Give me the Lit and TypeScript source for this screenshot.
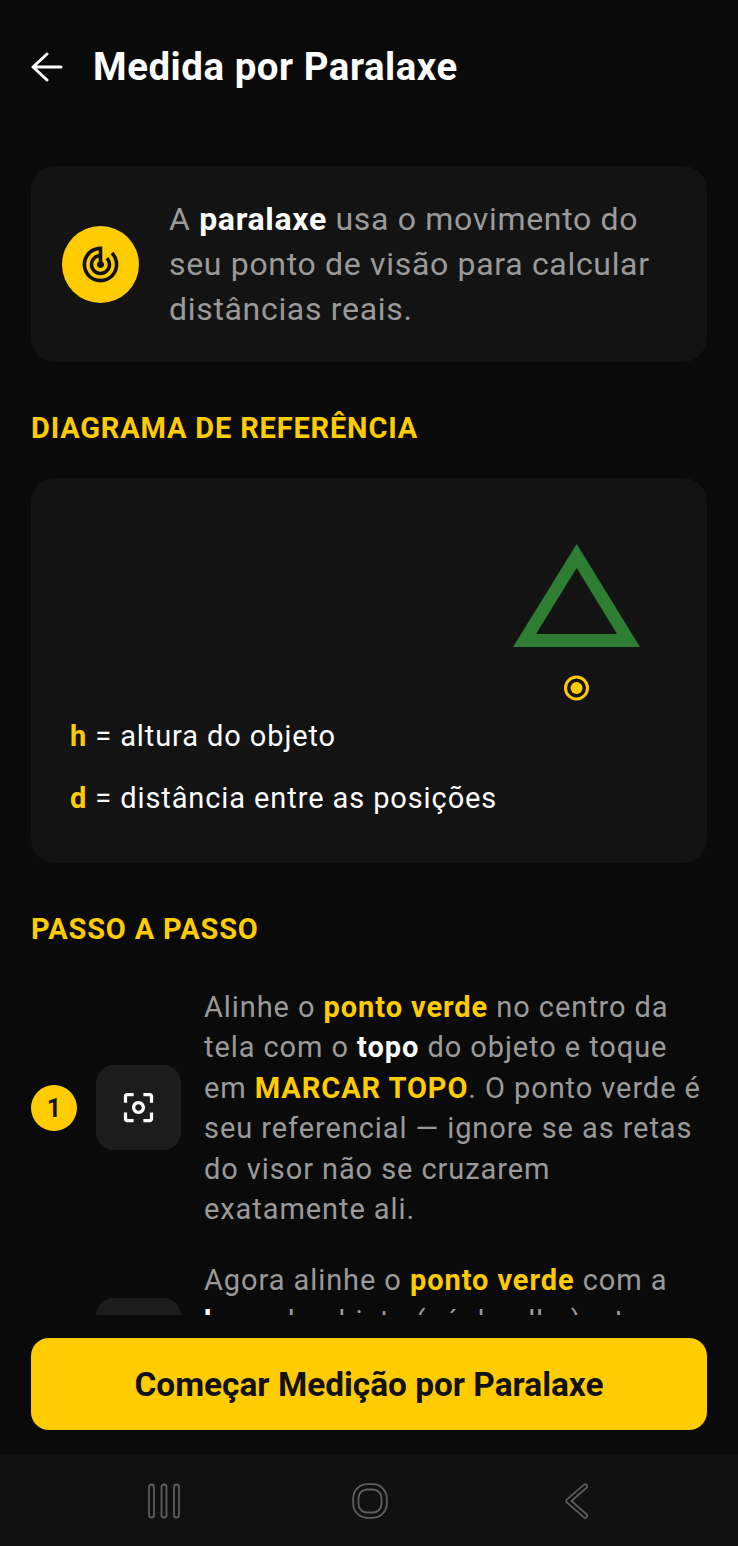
import { LitElement, css, html, svg } from 'lit';
import { customElement } from 'lit/decorators.js';

const focusIcon = svg`<path d="M5 15H3v4c0 1.1.9 2 2 2h4v-2H5v-4zM5 5h4V3H5c-1.1 0-2 .9-2 2v4h2V5zm14-2h-4v2h4v4h2V5c0-1.1-.9-2-2-2zm0 16h-4v2h4c1.1 0 2-.9 2-2v-4h-2v4zM12 8c-2.21 0-4 1.79-4 4s1.79 4 4 4 4-1.79 4-4-1.79-4-4-4zm0 6c-1.1 0-2-.9-2-2s.9-2 2-2 2 .9 2 2-.9 2-2 2z"/>`;

const trackIcon = svg`<path d="M19.07 4.93l-1.41 1.41C19.1 7.79 20 9.79 20 12c0 4.42-3.58 8-8 8s-8-3.58-8-8c0-4.08 3.05-7.44 7-7.93v2.02C8.16 6.57 6 9.03 6 12c0 3.31 2.69 6 6 6s6-2.69 6-6c0-1.66-.67-3.16-1.76-4.24l-1.41 1.41C15.55 9.9 16 10.9 16 12c0 2.21-1.79 4-4 4s-4-1.79-4-4c0-1.86 1.28-3.41 3-3.86v2.14c-.6.35-1 .98-1 1.72 0 1.1.9 2 2 2s2-.9 2-2c0-.74-.4-1.38-1-1.72V2h-1C6.48 2 2 6.48 2 12s4.48 10 10 10 10-4.48 10-10c0-2.76-1.12-5.26-2.93-7.07z"/>`;

@customElement('app-root')
export class AppRoot extends LitElement {
  render() {
    return html`
      <div class="screen">
        <header class="topbar">
          <svg class="back" viewBox="0 0 32 30" fill="none" stroke="#fff" stroke-width="3" stroke-linecap="round" stroke-linejoin="round">
            <path d="M2 15h28M16 2 2 15l14 13" />
          </svg>
          <h1>Medida por Paralaxe</h1>
        </header>

        <main class="content">
          <section class="card intro">
            <div class="intro-icon">
              <svg viewBox="0 0 24 24" fill="#111">${trackIcon}</svg>
            </div>
            <p>A <b>paralaxe</b> usa o movimento do seu ponto de visão para calcular distâncias reais.</p>
          </section>

          <h2 class="diagram-title">DIAGRAMA DE REFERÊNCIA</h2>
          <section class="card diagram">
            <!-- object triangle and observer mark -->
            <svg class="scene" viewBox="0 0 676 238">
              <path fill="#2e7d32" fill-rule="evenodd" d="M545.7 66 609 169H482ZM545.7 90 505 156H586Z" />
              <circle cx="545.5" cy="210" r="11" fill="none" stroke="#ffcc00" stroke-width="3" />
              <circle cx="545.5" cy="210" r="6" fill="#ffcc00" />
            </svg>
            <div class="legend">
              <div><b>h</b> = altura do objeto</div>
              <div><b>d</b> = distância entre as posições</div>
            </div>
          </section>

          <h2 class="steps-title">PASSO A PASSO</h2>
          <div class="steps">
            <article class="step">
              <span class="badge">1</span>
              <div class="tile"><svg viewBox="0 0 24 24" fill="#fff">${focusIcon}</svg></div>
              <p>Alinhe o <b>ponto verde</b> no centro da tela com o <b class="white">topo</b> do objeto e toque em <b>MARCAR TOPO</b>. O ponto verde é seu referencial — ignore se as retas do visor não se cruzarem exatamente ali.</p>
            </article>
            <article class="step">
              <span class="badge">2</span>
              <div class="tile"><svg viewBox="0 0 24 24" fill="#fff">${focusIcon}</svg></div>
              <p>Agora alinhe o <b>ponto verde</b> com a <b class="white">base</b> do objeto (pé do olho) e toque em <b>MARCAR BASE</b>. Use o mesmo ponto verde como referência.</p>
            </article>
          </div>
        </main>

        <div class="action">
          <button>Começar Medição por Paralaxe</button>
        </div>

        <nav class="navbar">
          <svg width="34" height="36" viewBox="0 0 34 36" fill="none" stroke="#5e5e5e" stroke-width="1.8">
            <rect x="2" y="1.5" width="5" height="33" rx="2.5" />
            <rect x="14.5" y="1.5" width="5" height="33" rx="2.5" />
            <rect x="27" y="1.5" width="5" height="33" rx="2.5" />
          </svg>
          <svg width="36" height="36" viewBox="0 0 36 36" fill="none" stroke="#5e5e5e" stroke-width="1.8">
            <rect x="1.2" y="1.2" width="33.6" height="33.6" rx="14" />
            <rect x="6.5" y="6.5" width="23" height="23" rx="8.5" />
          </svg>
          <svg width="26" height="36" viewBox="0 0 26 36" fill="none" stroke="#5e5e5e" stroke-width="1.8" stroke-linejoin="round">
            <path d="M19 1.6 1.8 16.6a1.8 1.8 0 0 0 0 2.8L19 34.4a2 2 0 0 0 2.6-3L6.5 18 21.6 4.6a2 2 0 0 0-2.6-3Z" />
          </svg>
        </nav>
      </div>
    `;
  }

  static styles = css`
    :host {
      display: block;
      font-family: Roboto, 'Noto Sans', sans-serif;
    }

    .screen {
      width: 738px;
      height: 1546px;
      background: #0a0a0a;
      display: flex;
      flex-direction: column;
      overflow: hidden;
    }

    .topbar {
      height: 133px;
      flex: none;
      box-sizing: border-box;
      padding-left: 31px;
      display: flex;
      align-items: center;
      gap: 30px;
    }

    .back {
      width: 32px;
      height: 30px;
    }

    h1 {
      margin: 0;
      color: #fff;
      font-size: 38.4px;
      font-weight: 700;
      letter-spacing: 0.55px;
    }

    .content {
      flex: 1;
      min-height: 0;
      overflow: hidden;
      padding: 33px 31px 0;
    }

    .card {
      background: #131313;
      border-radius: 24px;
    }

    .intro {
      height: 196px;
      box-sizing: border-box;
      padding: 0 31px;
      display: flex;
      align-items: center;
      gap: 30px;
    }

    .intro-icon {
      width: 77px;
      height: 77px;
      flex: none;
      border-radius: 50%;
      background: #ffcc00;
      display: flex;
      align-items: center;
      justify-content: center;
    }

    .intro-icon svg {
      width: 43px;
      height: 43px;
    }

    .intro p {
      margin: 0;
      color: #9a9a9a;
      font-size: 32px;
      line-height: 45px;
      letter-spacing: 0.68px;
    }

    .intro b {
      color: #fff;
      font-weight: 700;
    }

    h2 {
      margin: 0;
      color: #ffcc00;
      font-size: 29px;
      line-height: 39px;
      font-weight: 700;
      letter-spacing: 0.82px;
    }

    .diagram-title {
      margin: 47px 0 30px;
    }

    .diagram {
      height: 385px;
    }

    .scene {
      display: block;
      width: 676px;
      height: 238px;
    }

    .legend {
      padding-left: 39px;
      display: flex;
      flex-direction: column;
      gap: 22px;
      color: #fff;
      font-size: 29px;
      line-height: 40px;
      letter-spacing: 0.9px;
    }

    .legend b {
      color: #ffcc00;
    }

    .steps-title {
      margin: 47px 0 38px;
    }

    .steps {
      display: flex;
      flex-direction: column;
      gap: 31px;
    }

    .step {
      display: flex;
      align-items: center;
    }

    .badge {
      width: 46px;
      height: 46px;
      flex: none;
      border-radius: 50%;
      background: #ffcc00;
      color: #141414;
      font-size: 25px;
      font-weight: 700;
      display: flex;
      align-items: center;
      justify-content: center;
    }

    .tile {
      width: 85px;
      height: 85px;
      flex: none;
      margin: 0 23px 2px 19px;
      border-radius: 18px;
      background: #1c1c1c;
      display: flex;
      align-items: center;
      justify-content: center;
    }

    .tile svg {
      width: 39px;
      height: 39px;
    }

    .step p {
      margin: 0;
      color: #9a9a9a;
      font-size: 29px;
      line-height: 40.4px;
      letter-spacing: 0.92px;
    }

    .step b {
      color: #ffcc00;
      font-weight: 700;
    }

    .step b.white {
      color: #fff;
    }

    .action {
      flex: none;
      padding: 23px 31px 24px;
    }

    button {
      display: block;
      width: 100%;
      height: 92px;
      border: 0;
      padding: 0;
      border-radius: 18px;
      background: #ffcc00;
      color: #111;
      font-family: inherit;
      font-size: 33.4px;
      font-weight: 700;
    }

    .navbar {
      flex: none;
      height: 92px;
      background: #111;
      position: relative;
    }

    .navbar svg {
      position: absolute;
      top: 29px;
    }

    .navbar svg:nth-child(1) { left: 147px; }
    .navbar svg:nth-child(2) { left: 352px; }
    .navbar svg:nth-child(3) { left: 565px; }
  `;
}

declare global {
  interface HTMLElementTagNameMap {
    'app-root': AppRoot;
  }
}
